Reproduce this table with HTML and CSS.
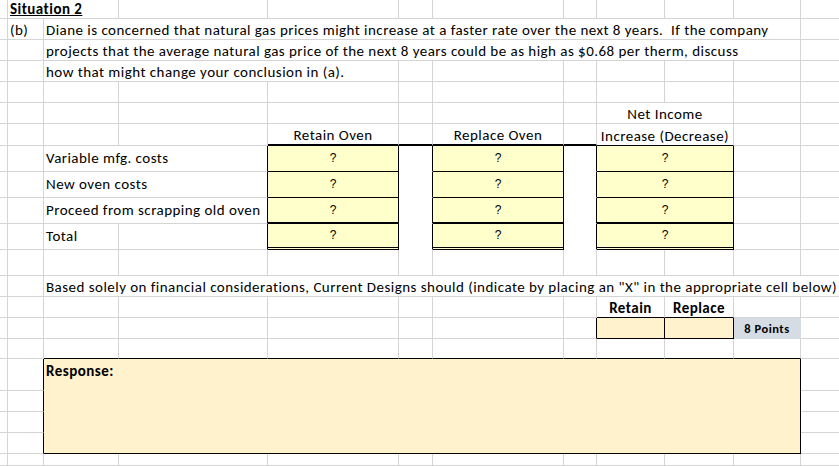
FILE: index.html
```html
<!DOCTYPE html>
<html>
<head>
<meta charset="utf-8">
<link rel="stylesheet" href="styles.css">
</head>
<body>
<div class="sheet">
  <!-- r0 -->
  <div class="c"></div>
  <div class="c s2 title"><span>Situation 2</span></div>
  <div class="c"></div><div class="c"></div><div class="c"></div><div class="c"></div><div class="c"></div><div class="c"></div><div class="c"></div><div class="c"></div>
  <div class="c e"></div>
  <!-- r1 -->
  <div class="c"></div>
  <div class="c">(b)</div>
  <div class="c s9">Diane is concerned that natural gas prices might increase at a faster rate over the next 8 years.&nbsp; If the company</div>
  <div class="c e"></div>
  <!-- r2 -->
  <div class="c"></div>
  <div class="c"></div>
  <div class="c s9">projects that the average natural gas price of the next 8 years could be as high as $0.68 per therm, discuss</div>
  <div class="c e"></div>
  <!-- r3 -->
  <div class="c"></div>
  <div class="c"></div>
  <div class="c s3">how that might change your conclusion in (a).</div>
  <div class="c"></div><div class="c"></div><div class="c"></div><div class="c"></div><div class="c"></div><div class="c"></div>
  <div class="c e"></div>
  <!-- r4 -->
  <div class="c"></div><div class="c"></div><div class="c"></div><div class="c"></div><div class="c"></div><div class="c"></div><div class="c"></div><div class="c"></div><div class="c"></div><div class="c"></div><div class="c"></div>
  <div class="c e"></div>
  <!-- r5 -->
  <div class="c"></div><div class="c"></div><div class="c"></div><div class="c"></div><div class="c"></div><div class="c"></div><div class="c"></div><div class="c"></div>
  <div class="c s2 ctr">Net Income</div>
  <div class="c"></div>
  <div class="c e"></div>
  <!-- r6 -->
  <div class="c"></div><div class="c"></div><div class="c"></div><div class="c"></div>
  <div class="c ctr tb">Retain Oven</div>
  <div class="c tb"></div>
  <div class="c ctr tb">Replace Oven</div>
  <div class="c tb"></div>
  <div class="c s2 ctr bb">Increase (Decrease)</div>
  <div class="c"></div>
  <div class="c e"></div>
  <!-- r7 -->
  <div class="c"></div><div class="c"></div>
  <div class="c s2 mid rb">Variable mfg. costs</div>
  <div class="c box">?</div>
  <div class="c gap"></div>
  <div class="c box">?</div>
  <div class="c gap"></div>
  <div class="c s2 box">?</div>
  <div class="c"></div>
  <div class="c e"></div>
  <!-- r8 -->
  <div class="c"></div><div class="c"></div>
  <div class="c s2 mid rb">New oven costs</div>
  <div class="c box">?</div>
  <div class="c gap"></div>
  <div class="c box">?</div>
  <div class="c gap"></div>
  <div class="c s2 box">?</div>
  <div class="c"></div>
  <div class="c e"></div>
  <!-- r9 -->
  <div class="c"></div><div class="c"></div>
  <div class="c s2 mid rb">Proceed from scrapping old oven</div>
  <div class="c box thick">?</div>
  <div class="c gap"></div>
  <div class="c box thick">?</div>
  <div class="c gap"></div>
  <div class="c s2 box thick">?</div>
  <div class="c"></div>
  <div class="c e"></div>
  <!-- r10 -->
  <div class="c"></div><div class="c"></div>
  <div class="c mid">Total</div>
  <div class="c rb"></div>
  <div class="c box dbl">?</div>
  <div class="c gap"></div>
  <div class="c box dbl">?</div>
  <div class="c gap"></div>
  <div class="c s2 box dbl">?</div>
  <div class="c"></div>
  <div class="c e"></div>
  <!-- r11 -->
  <div class="c"></div><div class="c"></div><div class="c"></div><div class="c"></div><div class="c"></div><div class="c"></div><div class="c"></div><div class="c"></div><div class="c"></div><div class="c"></div><div class="c"></div>
  <div class="c e"></div>
  <!-- r12 -->
  <div class="c"></div><div class="c"></div>
  <div class="c s10 e">Based solely on financial considerations, Current Designs should (indicate by placing an "X" in the appropriate cell below)</div>
  <!-- r13 -->
  <div class="c"></div><div class="c"></div><div class="c"></div><div class="c"></div><div class="c"></div><div class="c"></div><div class="c"></div><div class="c"></div>
  <div class="c ctr bold bb">Retain</div>
  <div class="c ctr bold bb">Replace</div>
  <div class="c"></div>
  <div class="c e"></div>
  <!-- r14 -->
  <div class="c"></div><div class="c"></div><div class="c"></div><div class="c"></div><div class="c"></div><div class="c"></div><div class="c"></div>
  <div class="c rb"></div>
  <div class="c pick"></div>
  <div class="c pick"></div>
  <div class="c pts">8 Points</div>
  <div class="c e"></div>
  <!-- r15 -->
  <div class="c"></div><div class="c"></div>
  <div class="c bb"></div><div class="c bb"></div><div class="c bb"></div><div class="c bb"></div><div class="c bb"></div><div class="c bb"></div><div class="c bb"></div><div class="c bb"></div><div class="c bb"></div>
  <div class="c e"></div>
  <!-- r16 - r19 -->
  <div class="c"></div><div class="c rb"></div>
  <div class="c resp">Response:</div>
  <div class="c e"></div>
  <div class="c"></div><div class="c rb"></div><div class="c e"></div>
  <div class="c"></div><div class="c rb"></div><div class="c e"></div>
  <div class="c"></div><div class="c rb"></div><div class="c e"></div>
  <!-- r20 -->
  <div class="c"></div><div class="c"></div><div class="c"></div><div class="c"></div><div class="c"></div><div class="c"></div><div class="c"></div><div class="c"></div><div class="c"></div><div class="c"></div><div class="c"></div>
  <div class="c e"></div>
</div>
</body>
</html>
```
FILE: styles.css
```css
html, body {
  margin: 0;
  padding: 0;
  background: #fff;
  overflow: hidden;
}

.sheet {
  display: grid;
  grid-template-columns: 8px 36px 75px 149px 131px 34px 131px 33px 68px 69px 67px 38px;
  grid-template-rows: 19px 21px 21px 21px 21px 21px 22px 26px 26px 26px 26px 26px 21px 21px 21px 20px 32px 21px 21px 21px 12px;
  width: 839px;
  height: 466px;
  font-family: "Carlito", "Calibri", "Lato", sans-serif;
  font-size: 15px;
  letter-spacing: 0.46px;
  color: #000;
}

.c {
  box-sizing: border-box;
  border-right: 1px solid #d4d4d4;
  border-bottom: 1px solid #d4d4d4;
  display: flex;
  align-items: flex-end;
  padding: 0 0 0 2px;
  line-height: 17px;
  white-space: nowrap;
  min-width: 0;
}

.e { border-right: none; }

.s2 { grid-column: span 2; }
.s3 { grid-column: span 3; }
.s9 { grid-column: span 9; }
.s10 { grid-column: span 10; }

.title {
  align-items: flex-start;
  padding-bottom: 0;
  line-height: 18px;
}

.title span {
  font-weight: bold;
  text-decoration: underline;
}

.ctr {
  justify-content: center;
  padding-left: 0;
}

.mid { align-items: center; padding-bottom: 0; }

.bold { font-weight: bold; }

.tb { border-bottom: 2px solid #000; }
.bb { border-bottom-color: #000; }
.rb { border-right-color: #000; }

.box {
  background: #ffffcc;
  border-right-color: #000;
  border-bottom-color: #000;
  justify-content: center;
  align-items: center;
  padding: 0;
  font-family: "Liberation Sans", Arial, sans-serif;
  font-size: 12px;
  letter-spacing: 0;
}

.thick { border-bottom: 2px solid #000; }
.dbl { border-bottom: 3px double #000; }

.gap {
  background: #fff;
  border-bottom-color: #fff;
  border-right-color: #000;
}

.pick {
  background: #fff2cc;
  border-right-color: #000;
  border-bottom-color: #000;
}

.pts {
  background: #d6dce4;
  border-right-color: #d6dce4;
  border-bottom-color: #d6dce4;
  justify-content: center;
  align-items: center;
  padding: 0;
  font-weight: bold;
  font-size: 12.5px;
  letter-spacing: 0.5px;
}

.resp {
  grid-column: 3 / 12;
  grid-row: 17 / 21;
  background: #fff2cc;
  border-right-color: #000;
  border-bottom-color: #000;
  align-items: flex-start;
  padding: 4px 0 0 2px;
  font-weight: bold;
}
```
